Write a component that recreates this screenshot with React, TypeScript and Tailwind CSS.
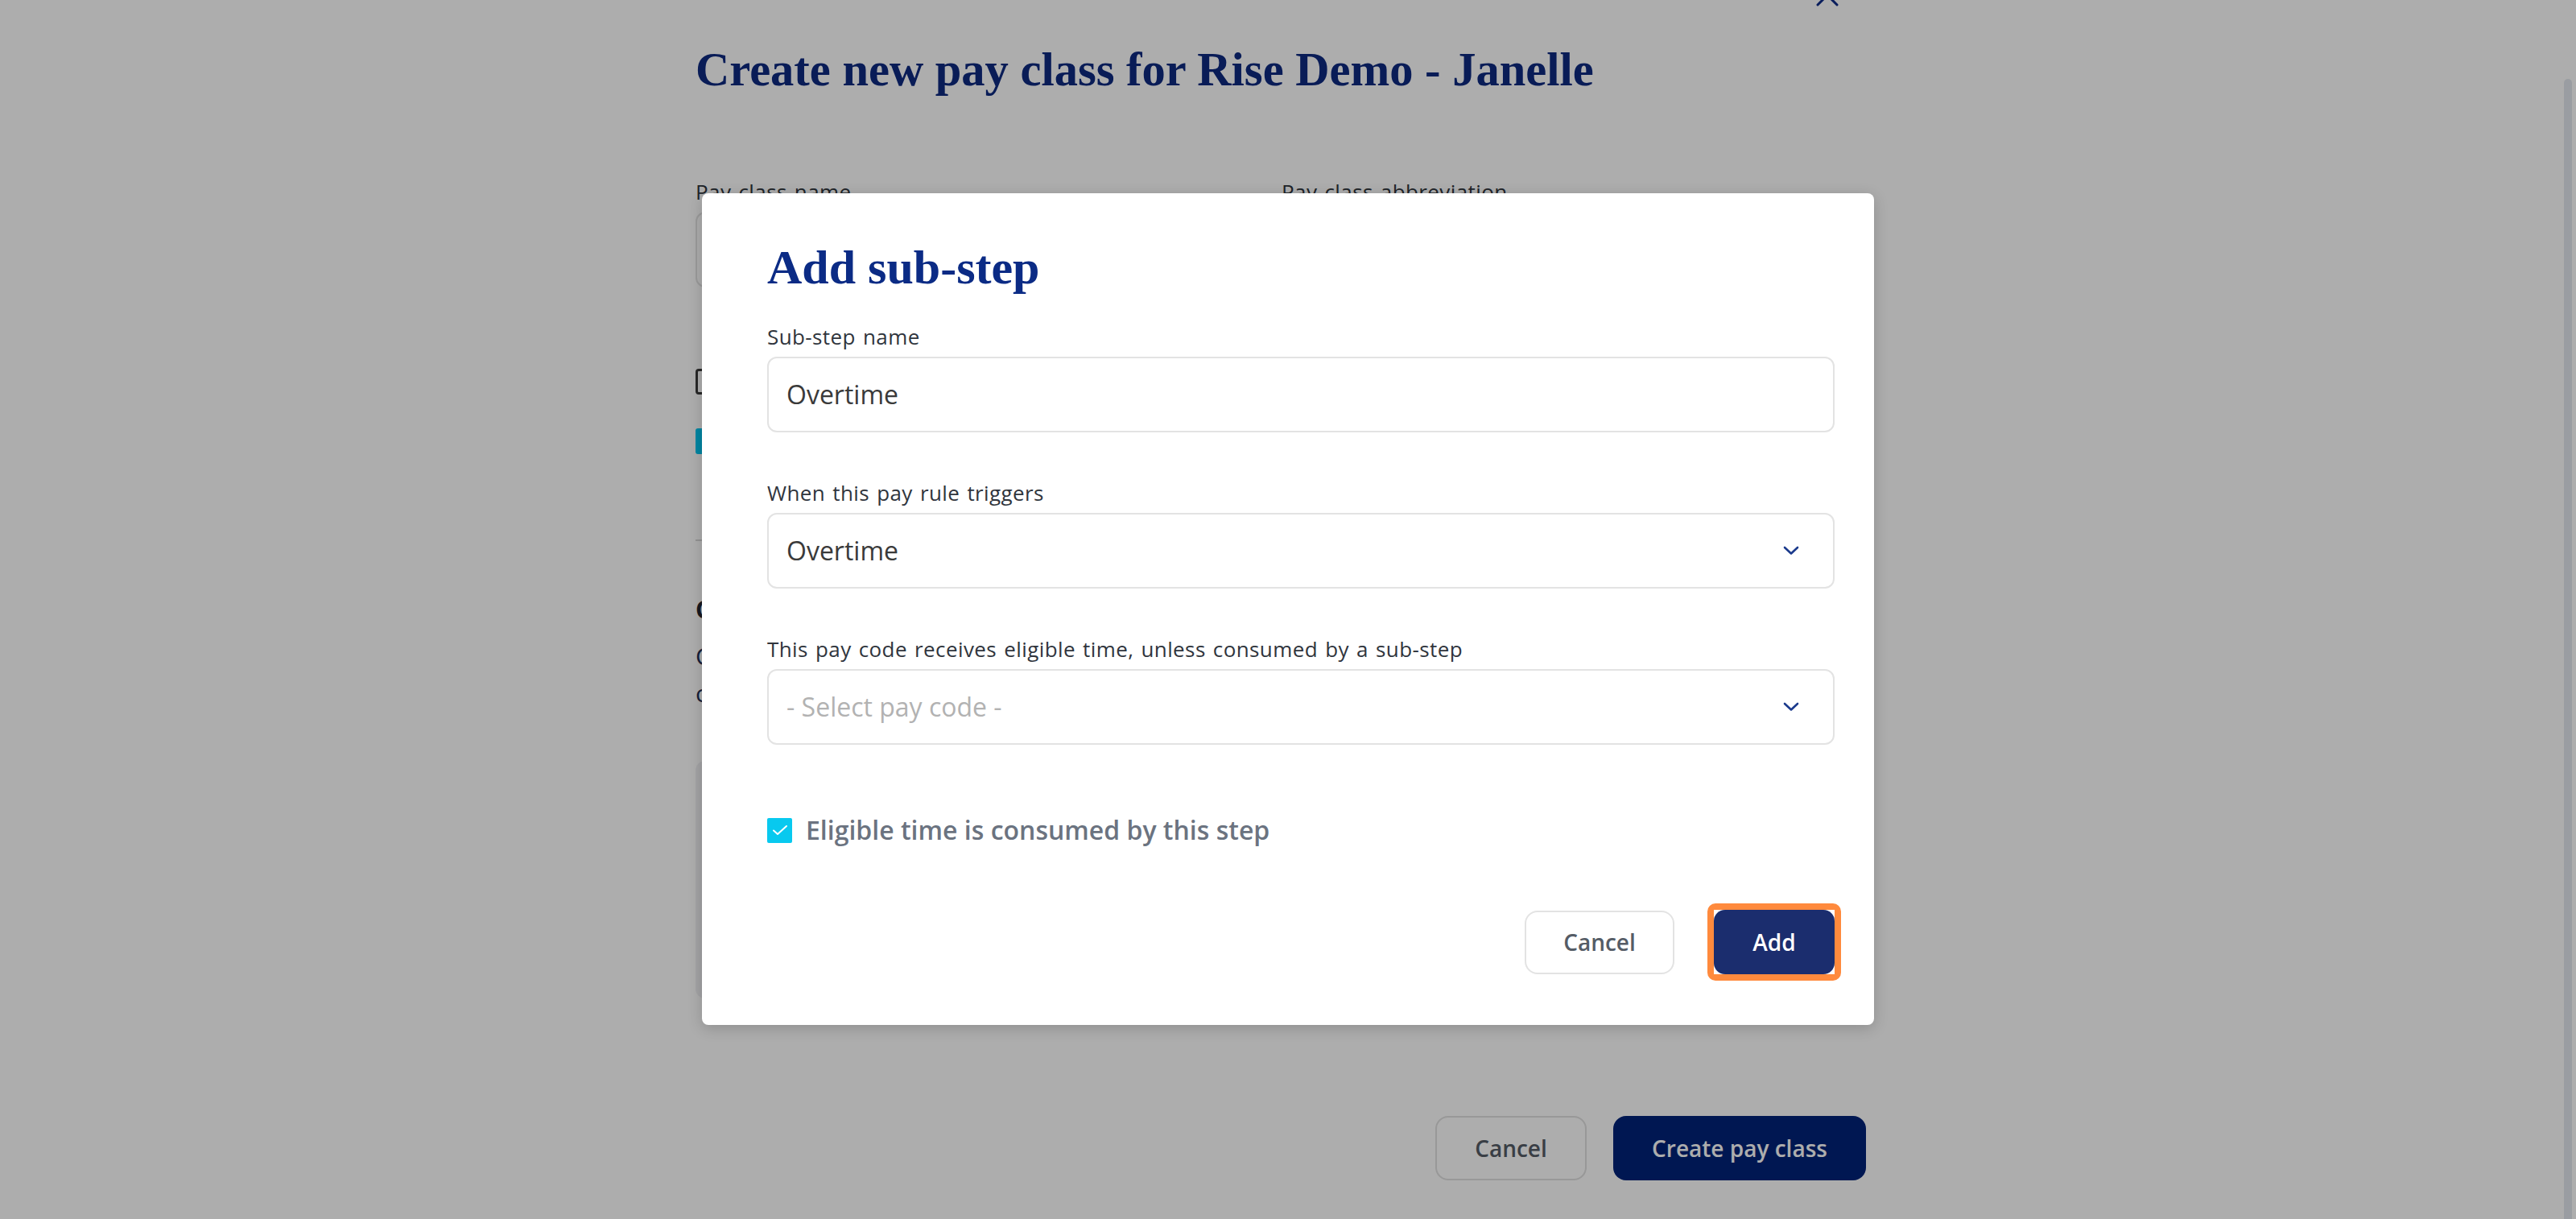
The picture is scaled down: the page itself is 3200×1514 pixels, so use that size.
const serif = "font-['Liberation_Serif',serif]"
const labelCls = 'text-[26px] leading-[36px] font-medium text-[#30353d] tracking-[0.4px] [word-spacing:2px]'

function Chevron() {
  return (
    <svg width="20" height="12" viewBox="0 0 20 12" fill="none" className="shrink-0">
      <polyline points="2,2 10,9.5 18,2" stroke="#1b3a8c" strokeWidth="2.6" strokeLinecap="round" strokeLinejoin="round" />
    </svg>
  )
}

function Field({ label, children, first }: { label: string; children: React.ReactNode; first?: boolean }) {
  return (
    <div className={first ? 'mt-[32px]' : 'mt-[57px]'}>
      <div className={labelCls}>{label}</div>
      <div className="mt-[7px] h-[94px] rounded-[12px] border-2 border-[#e3e3e3] pl-[22px] pr-[42px] flex items-center justify-between text-[32px]">
        {children}
      </div>
    </div>
  )
}

export default function App() {
  return (
    <div className="relative w-[3200px] h-[1514px] overflow-hidden bg-white font-['Open_Sans',sans-serif]">
      {/* page behind the dialog */}
      <div className="w-[3184px]">
        <div className="ml-[864px] w-[1456px] relative">
          <svg width="32" height="32" viewBox="0 0 32 32" className="absolute left-[1390px] top-[-22px]">
            <path d="M4 4 L28 28 M28 4 L4 28" stroke="#0e2c88" strokeWidth="3" strokeLinecap="round" />
          </svg>
          <h1 className={`${serif} pt-[52px] text-[58.5px] leading-[70px] font-bold text-[#0e2a80]`}>
            Create new pay class for Rise Demo - Janelle
          </h1>

          <div className="mt-[98px] grid grid-cols-2">
            <div className="pr-[32px]">
              <div className={labelCls}>Pay class name</div>
              <div className="mt-[7px] h-[94px] rounded-[12px] border-2 border-[#e3e3e3]" />
            </div>
            <div>
              <div className={labelCls}>Pay class abbreviation</div>
              <div className="mt-[7px] h-[94px] rounded-[12px] border-2 border-[#e3e3e3]" />
            </div>
          </div>

          <div className="mt-[101px] h-[32px] flex items-center gap-[16px]">
            <div className="w-[32px] h-[32px] rounded-[4px] border-[3px] border-[#3a3a3a]" />
            <span className="text-[30px] text-[#333]">Use as default pay class</span>
          </div>
          <div className="mt-[42px] h-[32px] flex items-center gap-[16px]">
            <div className="w-[32px] h-[32px] rounded-[3px] bg-[#00c5ee]" />
            <span className="text-[30px] text-[#333]">Apply pay rules to this pay class</span>
          </div>

          <div className="mt-[106px] border-t-2 border-[#d8d8d8]" />

          <div className="mt-[65px] text-[30px] leading-[40px] font-bold text-[#1f2430]">Calculation steps</div>
          <p className="mt-[15px] text-[30px] leading-[46px] text-[#1f2f55]">
            Calculation steps determine how eligible time is split between pay codes. Steps run in order, and each one
            applies to the time left over by the steps above it.
          </p>

          <div className="mt-[61px] h-[295px] rounded-[12px] bg-[#f0f0f4]" />

          <div className="mt-[146px] flex justify-end gap-[33px] pr-[2px]">
            <button className="w-[188px] h-[80px] rounded-[16px] border-2 border-[#e0e0e0] bg-white text-[28px] font-semibold text-[#555c66]">
              Cancel
            </button>
            <button className="w-[314px] h-[80px] rounded-[16px] bg-[#002379] text-[28px] font-semibold text-white">
              Create pay class
            </button>
          </div>
        </div>
      </div>

      {/* backdrop */}
      <div className="absolute inset-0 bg-black/[0.32]" />
      <div className="absolute right-[5px] top-[98px] w-[10px] h-[1500px] rounded-full bg-[#9a9da2]" />

      {/* dialog */}
      <div className="absolute left-[872px] top-[240px] w-[1456px] rounded-[8px] bg-white pl-[81px] pr-[49px] pt-[56px] pb-[63px] shadow-[0_4px_18px_rgba(0,0,0,0.18)]">
        <h2 className={`${serif} text-[60px] leading-[72px] font-bold text-[#0b2b85]`}>Add sub-step</h2>

        <Field label="Sub-step name" first>
          <span className="text-[#3a3a3a]">Overtime</span>
        </Field>
        <Field label="When this pay rule triggers">
          <span className="text-[#3a3a3a]">Overtime</span>
          <Chevron />
        </Field>
        <Field label="This pay code receives eligible time, unless consumed by a sub-step">
          <span className="text-[#b2b2b2]">- Select pay code -</span>
          <Chevron />
        </Field>

        <div className="mt-[84px] flex items-center gap-[17px] h-[44px]">
          <div className="w-[31px] h-[31px] rounded-[2px] bg-[#08c9ef] flex items-center justify-center">
            <svg width="20" height="14" viewBox="0 0 20 14" fill="none">
              <polyline points="2,7.5 7,12 18,2" stroke="white" strokeWidth="2" strokeLinecap="round" strokeLinejoin="round" />
            </svg>
          </div>
          <span className="text-[32px] font-semibold text-[#6b7380]">Eligible time is consumed by this step</span>
        </div>

        <div className="mt-[77px] flex justify-end items-center gap-[49px]">
          <button className="w-[186px] h-[79px] rounded-[16px] border-2 border-[#e3e3e3] bg-white text-[28px] font-semibold text-[#555c66]">
            Cancel
          </button>
          <div className="-m-2 rounded-[10px] bg-[#ff8a3d] p-2">
            <div className="bg-white">
              <button className="block w-[150px] h-[80px] rounded-[14px] bg-[#1b2d6e] text-[28px] font-semibold text-white">
                Add
              </button>
            </div>
          </div>
        </div>
      </div>
    </div>
  )
}
